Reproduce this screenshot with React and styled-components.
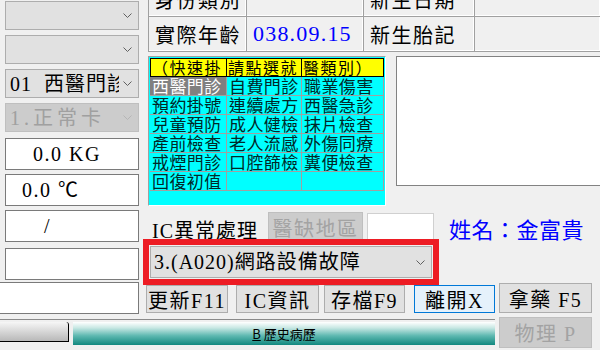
import React from "react";
import styled, { createGlobalStyle } from "styled-components";

const SERIF = `"Liberation Serif", "Noto Sans CJK TC", serif`;
const SANS = `"Noto Sans CJK TC", "Noto Sans", sans-serif`;

const GlobalStyle = createGlobalStyle`
  html, body {
    margin: 0;
    padding: 0;
    background: #f0f0f0;
  }
  body {
    font-family: ${SERIF};
  }
`;

const quickItems = [
  ["西醫門診", "自費門診", "職業傷害"],
  ["預約掛號", "連續處方", "西醫急診"],
  ["兒童預防", "成人健檢", "抹片檢查"],
  ["產前檢查", "老人流感", "外傷同療"],
  ["戒煙門診", "口腔篩檢", "糞便檢查"],
  ["回復初值", "", ""],
];

const Chevron = ({ $dim }) => (
  <ChevronSvg width="9" height="5" viewBox="0 0 9 5">
    <path
      d="M0.5 0.5 L4.5 4.5 L8.5 0.5"
      fill="none"
      stroke={$dim ? "#b5b5b5" : "#606060"}
      strokeWidth="1"
    />
  </ChevronSvg>
);

const App = () => {
  return (
    <React.Fragment>
      <GlobalStyle />
      <Page>
        <Upper>
          <LeftColumn>
            <Combo $mt={1}>
              <ComboText />
              <Chevron />
            </Combo>
            <Combo>
              <ComboText />
              <Chevron />
            </Combo>
            <Combo>
              <ComboText>{"01  西醫門診"}</ComboText>
              <Chevron />
            </Combo>
            <Combo $disabled>
              <ComboText $ls={4}>1.正常卡</ComboText>
              <Chevron $dim />
            </Combo>
            <TextBox $mt={6} $pl={27}>
              {"0.0 KG"}
            </TextBox>
            <TextBox $mt={4} $pl={16}>
              {"0.0 ℃"}
            </TextBox>
            <TextBox $mt={4} $pl={38}>
              /
            </TextBox>
            <TextBox $mt={6} />
          </LeftColumn>

          <RightPanel>
            <InfoTable>
              <InfoCell>身份類別</InfoCell>
              <InfoCell />
              <InfoCell>新生日期</InfoCell>
              <InfoCell />
              <InfoCell>實際年齡</InfoCell>
              <InfoCell $value>038.09.15</InfoCell>
              <InfoCell>新生胎記</InfoCell>
              <InfoCell />
            </InfoTable>

            <Middle>
              <QuickBox>
                <QuickGrid>
                  <HeaderCell>（快速掛</HeaderCell>
                  <HeaderCell>請點選就</HeaderCell>
                  <HeaderCell>醫類別）</HeaderCell>
                  {quickItems.map((row, r) =>
                    row.map((label, c) => (
                      <QuickCell key={`${r}-${c}`} $selected={r === 0 && c === 0}>
                        {label}
                      </QuickCell>
                    ))
                  )}
                </QuickGrid>
              </QuickBox>
              <NotesBox />
            </Middle>

            <IcRow>
              <IcLabel>IC異常處理</IcLabel>
              <Button $w={95} $h={31} $ml={10} $disabled>
                醫缺地區
              </Button>
              <SmallInput />
              <NameLabel>姓名：金富貴</NameLabel>
            </IcRow>

            <AlertCombo>
              <ComboText>3.(A020)網路設備故障</ComboText>
              <Chevron />
            </AlertCombo>
          </RightPanel>
        </Upper>

        <Lower>
          <LowerMain>
            <ActionRow>
              <WideTextBox />
              <Button $w={82} $ml={7}>更新F11</Button>
              <Button $w={83} $ml={8}>IC資訊</Button>
              <Button $w={81} $ml={5}>存檔F9</Button>
              <Button $w={81} $ml={9} $focused>
                離開X
              </Button>
            </ActionRow>
            <TabStrip>
              <BlankTab />
              <ActiveTab>
                <span>
                  <u>B</u> 歷史病歷
                </span>
              </ActiveTab>
            </TabStrip>
          </LowerMain>
          <SideButtons>
            <Button $w={93} $h={30} $ml={4}>
              {"拿藥 F5"}
            </Button>
            <Button $w={93} $h={31} $ml={4} $disabled>
              {"物理 P"}
            </Button>
          </SideButtons>
        </Lower>
      </Page>
    </React.Fragment>
  );
};

export default App;

const Page = styled.div`
  width: 600px;
  height: 350px;
  overflow: hidden;
  background: #f0f0f0;
  display: flex;
  flex-direction: column;
  color: #000000;
`;

const Upper = styled.div`
  display: grid;
  grid-template-columns: 148px 452px;
  height: 282px;
`;

const LeftColumn = styled.div`
  display: flex;
  flex-direction: column;
  padding-left: 5px;
  width: 134px;
`;

const Combo = styled.div`
  box-sizing: border-box;
  height: 29px;
  margin-top: ${(p) => (p.$mt !== undefined ? p.$mt : 5)}px;
  display: flex;
  align-items: center;
  padding: 0 6px 0 4px;
  background: ${(p) => (p.$disabled ? "#cccccc" : "#e1e1e1")};
  border: 1px solid ${(p) => (p.$disabled ? "#bfbfbf" : "#adadad")};
  color: ${(p) => (p.$disabled ? "#a0a0a0" : "#000000")};
`;

const ComboText = styled.div`
  flex: 1;
  overflow: hidden;
  white-space: pre;
  font-size: 20px;
  line-height: 24px;
  letter-spacing: ${(p) => (p.$ls !== undefined ? p.$ls : 1)}px;
`;

const ChevronSvg = styled.svg`
  flex: none;
  margin-left: 4px;
  display: block;
`;

const TextBox = styled.div`
  box-sizing: border-box;
  height: 32px;
  margin-top: ${(p) => p.$mt || 0}px;
  padding-left: ${(p) => p.$pl || 0}px;
  background: #ffffff;
  border: 1px solid #7a7a7a;
  font-size: 20px;
  line-height: 30px;
  letter-spacing: 1.5px;
  white-space: pre;
`;

const RightPanel = styled.div`
  display: flex;
  flex-direction: column;
`;

const InfoTable = styled.div`
  margin-top: -17px;
  display: grid;
  grid-template-columns: 98px 117px 111px 126px;
  grid-template-rows: 34px 35px;
  border-left: 1px solid #a0a0a0;
  box-sizing: border-box;
`;

const InfoCell = styled.div`
  box-sizing: border-box;
  display: flex;
  align-items: center;
  padding-left: 6px;
  border-right: 1px solid #a0a0a0;
  border-bottom: 1px solid #a0a0a0;
  box-shadow: inset -1px -1px 0 #ffffff;
  font-size: ${(p) => (p.$value ? 22 : 20)}px;
  letter-spacing: ${(p) => (p.$value ? 1.2 : 1.5)}px;
  color: ${(p) => (p.$value ? "#0000ff" : "#000000")};
  white-space: nowrap;
`;

const Middle = styled.div`
  display: flex;
  align-items: flex-start;
  margin-top: 4px;
`;

const QuickBox = styled.div`
  box-sizing: border-box;
  width: 238px;
  height: 150px;
  padding: 1px;
  background: #00ffff;
  border: 1px solid;
  border-color: #a0a0a0 #ffffff #ffffff #a0a0a0;
`;

const QuickGrid = styled.div`
  display: grid;
  grid-template-columns: 77px 75px 82px;
  grid-auto-rows: 19px;
`;

const HeaderCell = styled.div`
  box-sizing: border-box;
  background: #ffff00;
  border: 1px solid #000000;
  border-left-width: 0;
  &:first-child {
    border-left-width: 1px;
  }
  font-family: ${SANS};
  font-size: 16px;
  line-height: 17px;
  letter-spacing: 1.5px;
  padding-left: 1px;
  white-space: nowrap;
  overflow: hidden;
`;

const QuickCell = styled.div`
  box-sizing: border-box;
  border-right: 1px solid #a0a0a0;
  border-bottom: 1px solid #a0a0a0;
  background: ${(p) => (p.$selected ? "#808080" : "transparent")};
  color: ${(p) => (p.$selected ? "#ffffff" : "#002828")};
  font-family: ${SANS};
  font-size: 17px;
  line-height: 18px;
  letter-spacing: 0.4px;
  padding-left: 2px;
  white-space: nowrap;
  overflow: hidden;
`;

const NotesBox = styled.div`
  box-sizing: border-box;
  width: 206px;
  height: 130px;
  margin-left: 10px;
  background: #ffffff;
  border: 1px solid #828282;
  border-right: none;
`;

const IcRow = styled.div`
  display: flex;
  align-items: flex-start;
  margin-top: 6px;
  height: 32px;
`;

const IcLabel = styled.div`
  margin-left: 4px;
  margin-top: 7px;
  font-size: 20px;
  line-height: 24px;
  letter-spacing: 1px;
  white-space: nowrap;
`;

const Button = styled.div`
  box-sizing: border-box;
  flex: none;
  width: ${(p) => p.$w}px;
  height: ${(p) => p.$h || 28}px;
  margin-left: ${(p) => p.$ml || 0}px;
  display: flex;
  align-items: center;
  justify-content: center;
  white-space: pre;
  font-size: 20px;
  letter-spacing: 1.5px;
  background: ${(p) =>
    p.$disabled ? "#cccccc" : p.$focused ? "#e5f1fb" : "#e1e1e1"};
  border: 1px solid
    ${(p) => (p.$disabled ? "#bfbfbf" : p.$focused ? "#0078d7" : "#adadad")};
  color: ${(p) => (p.$disabled ? "#a3a3a3" : "#000000")};
`;

const SmallInput = styled.div`
  box-sizing: border-box;
  width: 67px;
  height: 31px;
  margin: 1px 0 0 4px;
  background: #ffffff;
  border: 1px solid #d0d0d0;
`;

const NameLabel = styled.div`
  margin-left: 15px;
  margin-top: 5px;
  font-size: 22px;
  line-height: 28px;
  letter-spacing: 0.5px;
  color: #0000ff;
  white-space: nowrap;
`;

const AlertCombo = styled(Combo)`
  width: 282px;
  height: 32px;
  margin: 2px 0 0 2px;
  padding: 0 6px 0 3px;
  outline: 6px solid #ed1c24;
  outline-offset: 1px;
`;

const Lower = styled.div`
  display: grid;
  grid-template-columns: 495px 105px;
`;

const LowerMain = styled.div`
  display: flex;
  flex-direction: column;
`;

const ActionRow = styled.div`
  display: flex;
  align-items: flex-start;
  height: 32px;
  & > div + div {
    margin-top: 3px;
  }
`;

const WideTextBox = styled.div`
  box-sizing: border-box;
  width: 141px;
  height: 32px;
  margin-left: -1px;
  background: #ffffff;
  border: 1px solid #7a7a7a;
`;

const TabStrip = styled.div`
  display: flex;
  align-items: flex-start;
  margin-top: 5px;
  padding-top: 2px;
  border-top: 1px solid #8a8a8a;
  height: 26px;
`;

const BlankTab = styled.div`
  box-sizing: border-box;
  width: 69px;
  height: 20px;
  background: linear-gradient(#f6f6f6, #b8b8b8);
  border-right: 1px solid #000000;
  border-bottom: 1px solid #000000;
  border-top-right-radius: 3px;
`;

const ActiveTab = styled.div`
  flex: 1;
  margin-left: 4px;
  height: 23px;
  display: flex;
  align-items: center;
  justify-content: center;
  font-family: ${SANS};
  font-size: 13px;
  color: #000000;
  white-space: pre;
  background: linear-gradient(
    #ffffff 0%,
    #c9e8e4 25%,
    #5db8b0 60%,
    #12887f 100%
  );
`;

const SideButtons = styled.div`
  display: flex;
  flex-direction: column;
  gap: 4px;
  padding-top: 1px;
`;
